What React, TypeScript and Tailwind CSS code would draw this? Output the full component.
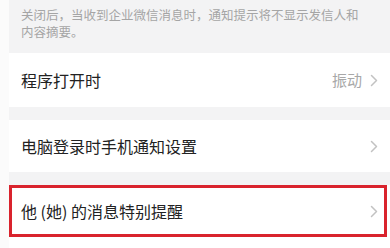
import React from 'react';

const font = '"Noto Sans CJK SC", "Noto Sans", sans-serif';

function Chevron() {
  return (
    <svg width="8" height="13" viewBox="0 0 8 13" className="shrink-0">
      <polyline points="1.5,1.5 6.5,6.5 1.5,11.5" fill="none" stroke="#c2c2c2" strokeWidth="1.5" strokeLinecap="round" strokeLinejoin="round" />
    </svg>
  );
}

export default function App() {
  return (
    <div className="flex w-[390px] h-[248px] bg-[#fbfbfb] overflow-hidden" style={{ fontFamily: font }}>
      <div className="w-[9px] shrink-0" />
      <div className="flex-1 flex flex-col bg-white">
        <div className="h-[53px] bg-[#f3f3f4] pl-[12px] pr-[20px] pt-[6px] text-[12.5px] leading-[17px] text-[#a5a5a5]">
          关闭后，当收到企业微信消息时，通知提示将不显示发信人和内容摘要。
        </div>
        <div className="h-[54px] flex items-center justify-between pl-[12px] pr-[12px]">
          <span className="text-[16px] text-[#222222]">程序打开时</span>
          <div className="flex items-center gap-[8px]">
            <span className="text-[15px] text-[#a8a8a8]">振动</span>
            <Chevron />
          </div>
        </div>
        <div className="h-[13px] bg-[#f3f3f4]" />
        <div className="h-[52px] flex items-center justify-between pl-[12px] pr-[12px]">
          <span className="text-[16px] text-[#222222]">电脑登录时手机通知设置</span>
          <Chevron />
        </div>
        <div className="h-[13px] bg-[#f3f3f4]" />
        <div className="h-[52px] mr-[3px] border-[3px] border-[#d9232d] flex items-center justify-between pl-[9px] pr-[6px]">
          <span className="text-[16px] text-[#222222]">他 (她) 的消息特别提醒</span>
          <Chevron />
        </div>
        <div className="flex-1 bg-white" />
      </div>
    </div>
  );
}
